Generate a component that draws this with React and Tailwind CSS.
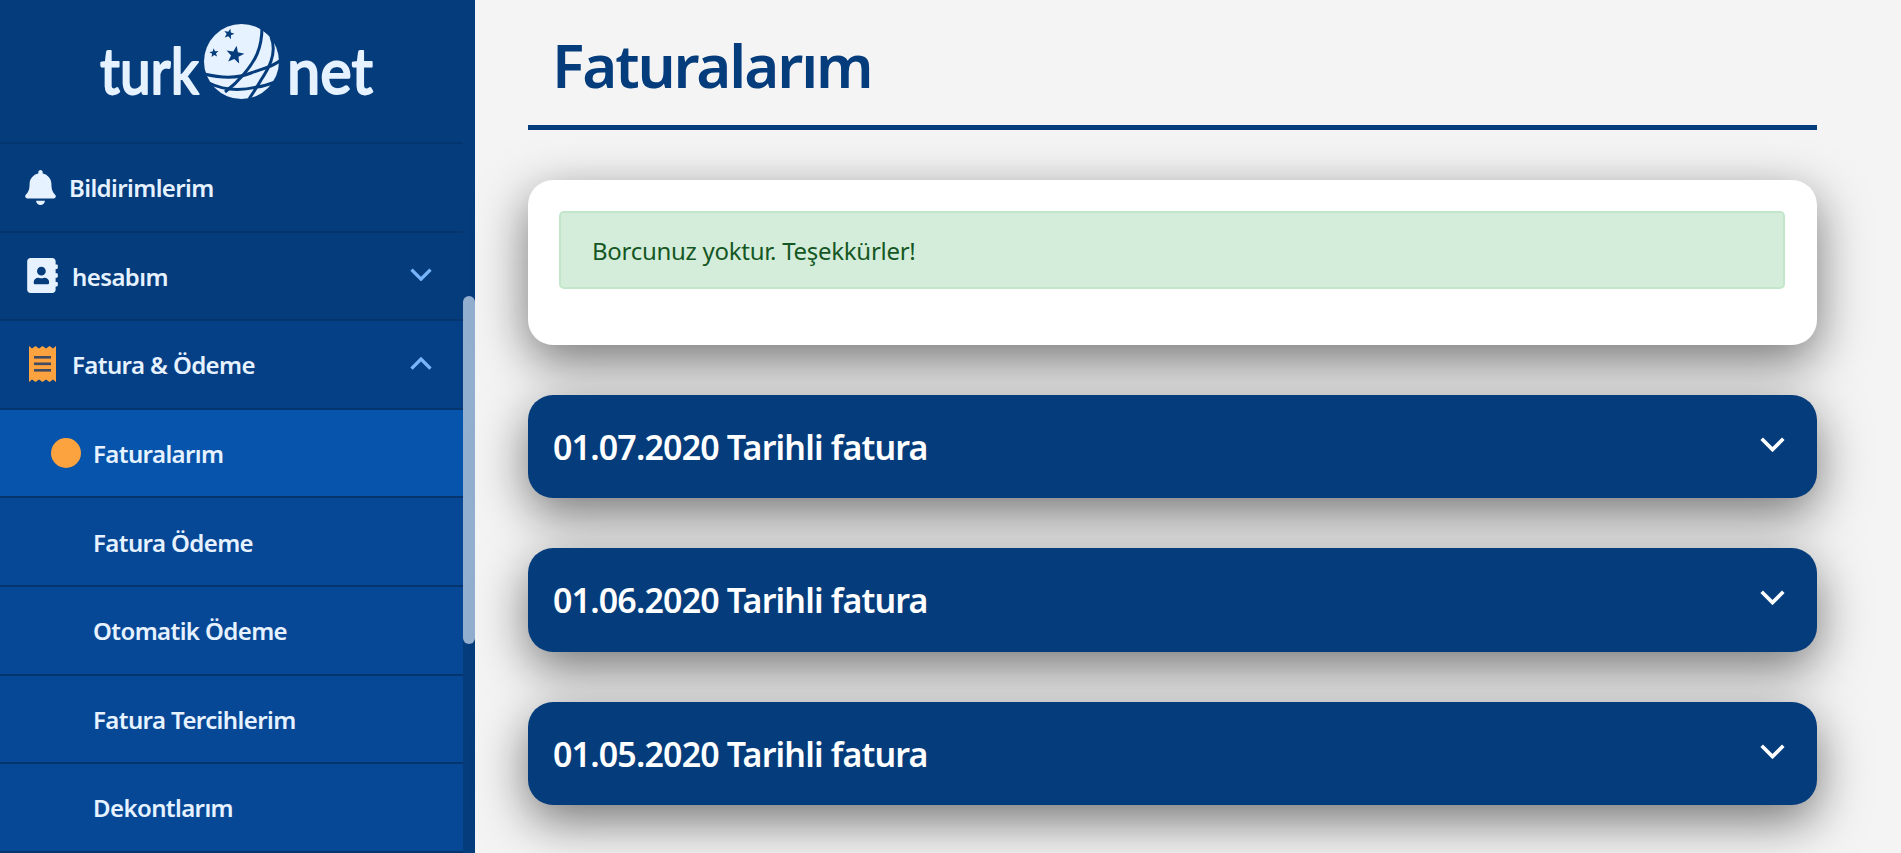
import React from "react";
import { FaBell, FaAddressBook } from "react-icons/fa";

const font = { fontFamily: '"Noto Sans", "Open Sans", sans-serif' };

function star(cx, cy, r, rot = 0) {
  const pts = [];
  for (let i = 0; i < 10; i++) {
    const rad = i % 2 === 0 ? r : r * 0.42;
    const a = ((-90 + rot + i * 36) * Math.PI) / 180;
    pts.push(`${(cx + rad * Math.cos(a)).toFixed(2)},${(cy + rad * Math.sin(a)).toFixed(2)}`);
  }
  return pts.join(" ");
}

function Logo() {
  const c = "#e6f2ff";
  const d = "#053c7c";
  return (
    <svg width="290" height="90" viewBox="0 0 290 90">
      <g fill={c} stroke={c} strokeWidth="1.8" strokeLinejoin="round" style={{ fontFamily: "Lato, sans-serif", fontWeight: 500 }}>
        <text x="0" y="75" fontSize="64" textLength="99" lengthAdjust="spacingAndGlyphs">turk</text>
        <text x="187" y="75" fontSize="64" textLength="86" lengthAdjust="spacingAndGlyphs">net</text>
      </g>
      <g transform="translate(-101 -20)">
        <circle cx="242.5" cy="62.5" r="37.5" fill={c} />
        <g fill="none" stroke={d} strokeWidth="3">
          <path d="M263 28 C263 50 256 62 245 75 C240 81 234 87 226 93" />
          <path d="M272 38 C279 55 268 72 262 81 C258 88 254 94 250 100" />
          <path d="M205 75 C222 79 238 80 252 74 C262 70 272 69 282 61" />
          <path d="M210 84 C228 93 245 91 258 88 C266 87 271 85 276 83" />
        </g>
        <polygon points={star(236, 56, 9.5, 10)} fill={d} />
        <polygon points={star(230, 35, 5.5, 15)} fill={d} />
        <polygon points={star(215, 54, 4.8, -5)} fill={d} />
      </g>
    </svg>
  );
}

function Chevron({ up, color, size = 22, width = 3 }) {
  return (
    <svg width={size} height={size * 0.6} viewBox="0 0 22 13" fill="none">
      <path d={up ? "M1.5 11.5 L11 2 L20.5 11.5" : "M1.5 1.5 L11 11 L20.5 1.5"} stroke={color} strokeWidth={width} />
    </svg>
  );
}

function Receipt() {
  return (
    <svg width="27" height="36" viewBox="0 0 27 36">
      <path d="M0 0 L3 2.5 L6.5 0 L10 2.5 L13.500 0 L17 2.500 L20.500 0 L24 2.500 L27 0 V36 L24 33.500 L20.500 36 L17 33.500 L13.500 36 L10 33.500 L6.500 36 L3 33.500 L0 36 Z" fill="#fca23f" />
      <rect x="5" y="10" width="17" height="2.600" fill="#3f4a63" />
      <rect x="5" y="16.500" width="17" height="2.600" fill="#3f4a63" />
      <rect x="5" y="23" width="17" height="2.600" fill="#3f4a63" />
    </svg>
  );
}

function TopRow({ icon, label, chevron, bg, iconBox, textLeft }) {
  return (
    <div className={`h-[88.6px] flex items-center border-b-2 border-[#04356f] ${bg}`}>
      <div className={`flex items-center justify-center shrink-0 ${iconBox}`}>{icon}</div>
      <span className={`flex-1 pt-[2px] text-[24px] font-semibold text-[#e6f2ff] tracking-[-0.6px] ${textLeft}`}>{label}</span>
      {chevron && (
        <div className="pr-[31px] -mt-[2px]">
          <Chevron up={chevron === "up"} color="#78b4fa" width={3.4} />
        </div>
      )}
    </div>
  );
}

function SubRow({ label, active }) {
  return (
    <div className={`h-[88.6px] flex items-center border-b-2 border-[#04356f] ${active ? "bg-[#0654ab]" : "bg-[#064896]"}`}>
      <div className="w-[93px] pl-[51px] shrink-0 flex items-center">
        {active && <div className="w-[30px] h-[30px] rounded-full bg-[#fca23f]" />}
      </div>
      <span className="pt-[2px] text-[24px] font-semibold text-[#e6f2ff] tracking-[-0.6px]">{label}</span>
    </div>
  );
}

function Accordion({ label }) {
  return (
    <div className="h-[103.5px] rounded-[25px] bg-[#053c7c] shadow-[0_16px_50px_rgba(0,0,0,0.52)] flex items-center justify-between pl-[25px] pr-[32px]">
      <span className="pt-[2px] text-[34px] font-semibold text-white tracking-[-0.85px]">{label}</span>
      <div className="-mt-[4px]">
        <Chevron color="#ffffff" size={25} width={3.2} />
      </div>
    </div>
  );
}

export default function App() {
  return (
    <div className="flex h-[853px] w-[1901px] overflow-hidden bg-[#f4f4f4]" style={font}>
      <aside className="w-[475px] h-full shrink-0 flex bg-[#053c7c]">
        <nav className="w-[463px] shrink-0 overflow-hidden">
          <div className="h-[144px] flex items-center justify-center border-b-2 border-[#04356f] pl-[27px] pb-[14px]">
            <Logo />
          </div>
          <TopRow icon={<FaBell size={35} color="#e6f2ff" />} label="Bildirimlerim" iconBox="w-[56px] pl-[25px] justify-start" textLeft="pl-[13px]" bg="bg-[#053c7c]" />
          <TopRow icon={<FaAddressBook size={35} color="#e6f2ff" />} label="hesabım" chevron="down" iconBox="w-[58px] pl-[27px] justify-start" textLeft="pl-[14px]" bg="bg-[#053c7c]" />
          <TopRow icon={<Receipt />} label="Fatura & Ödeme" chevron="up" iconBox="w-[58px] pl-[29px] justify-start" textLeft="pl-[14px]" bg="bg-[#053f85]" />
          <SubRow label="Faturalarım" active />
          <SubRow label="Fatura Ödeme" />
          <SubRow label="Otomatik Ödeme" />
          <SubRow label="Fatura Tercihlerim" />
          <SubRow label="Dekontlarım" />
        </nav>
        <div className="w-[12px] h-full pt-[296px] bg-[#053c7c]">
          <div className="h-[348px] rounded-[6px] bg-[#93afcf]" />
        </div>
      </aside>
      <main className="flex-1 pl-[53px] pr-[84px]">
        <div className="h-[130px] border-b-[5px] border-[#053c7c] pl-[24px] flex items-center pt-[4px]">
          <h1 className="text-[60px] font-semibold text-[#053c7c] tracking-[-2.1px]">Faturalarım</h1>
        </div>
        <div className="mt-[50px] h-[165px] rounded-[25px] bg-white shadow-[0_16px_50px_rgba(0,0,0,0.52)] pl-[31px] pr-[32px] pt-[31px]">
          <div className="h-[78px] rounded-[5px] border-2 border-[#c3e6cb] bg-[#d4edda] flex items-center pl-[31px] pt-[2px] text-[24px] text-[#155724] tracking-[-0.28px]">
            Borcunuz yoktur. Teşekkürler!
          </div>
        </div>
        <div className="mt-[49.7px] flex flex-col gap-[50px]">
          <Accordion label="01.07.2020 Tarihli fatura" />
          <Accordion label="01.06.2020 Tarihli fatura" />
          <Accordion label="01.05.2020 Tarihli fatura" />
        </div>
      </main>
    </div>
  );
}
